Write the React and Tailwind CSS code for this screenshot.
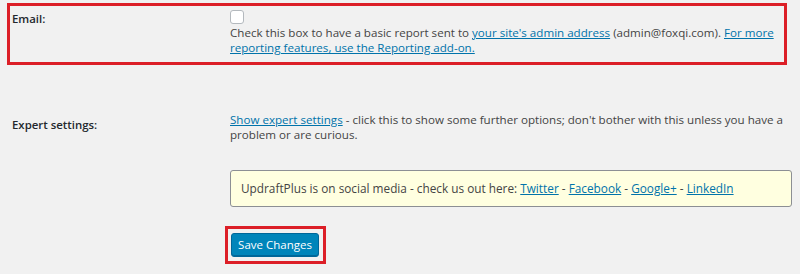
export default function App() {
  return (
    <div className="w-[800px] h-[274px] overflow-hidden bg-[#f1f1f1] font-['Open_Sans',sans-serif] text-[11.6px] leading-[15px] text-[#444] pt-[3px]">
      <div className="ml-[7px] w-[780px] h-[62px] border-[3px] border-[#dc1f27] flex pl-[2px]">
        <div className="w-[218px] shrink-0 pt-[5px] font-semibold text-[11.4px] text-[#23282d]">Email:</div>
        <div className="pt-[4px]">
          <div className="w-[14px] h-[14px] bg-white border border-[#b4b9be] rounded-[3px]"></div>
          <p className="mt-[1px] whitespace-nowrap">
            Check this box to have a basic report sent to{" "}
            <a className="text-[#0073aa] underline" href="#">your site's admin address</a>{" "}
            (admin@foxqi.com).{" "}
            <a className="text-[#0073aa] underline" href="#">
              For more
              <br />
              reporting features, use the Reporting add-on.
            </a>
          </p>
        </div>
      </div>

      <div className="flex pl-[12px] mt-[47px]">
        <div className="w-[218px] shrink-0 pt-[5px] font-semibold text-[11.4px] text-[#23282d]">Expert settings:</div>
        <div className="whitespace-nowrap">
          <a className="text-[#0073aa] underline" href="#">Show expert settings</a> - click this to show some further options; don't bother with this unless you have a
          <br />
          problem or are curious.
        </div>
      </div>

      <div className="ml-[230px] mt-[28px] w-[562px] h-[37px] bg-[#ffffe0] border border-[#8c8f94] rounded-[3px] flex items-center pl-[10px]">
        <span className="text-[11.8px]">
          UpdraftPlus is on social media - check us out here:{" "}
          <a className="text-[#0073aa] underline" href="#">Twitter</a> -{" "}
          <a className="text-[#0073aa] underline" href="#">Facebook</a> -{" "}
          <a className="text-[#0073aa] underline" href="#">Google+</a> -{" "}
          <a className="text-[#0073aa] underline" href="#">LinkedIn</a>
        </span>
      </div>

      <div className="ml-[225px] mt-[19px] w-[101px] h-[38px] border-[3px] border-[#dc1f27] pl-[3px] pt-[4px]">
        <button className="w-[88px] h-[24px] bg-[#0085ba] border border-[#006799] rounded-[3px] text-white text-[11.5px] leading-[22px] shadow-[inset_0_-1px_0_#006799]">
          Save Changes
        </button>
      </div>
    </div>
  );
}
